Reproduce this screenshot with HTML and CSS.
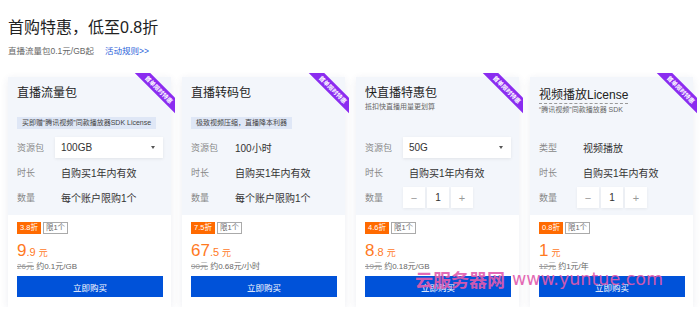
FILE: index.html
```html
<!DOCTYPE html>
<html lang="zh-CN">
<head>
<meta charset="utf-8">
<title>首购特惠</title>
<link rel="stylesheet" href="styles.css">
</head>
<body>
<div class="page">
  <h1 class="title">首购特惠，低至0.8折</h1>
  <p class="intro"><span>直播流量包0.1元/GB起</span><a class="rule">活动规则&gt;&gt;</a></p>
  <div class="cards">
    <div class="card">
      <div class="ribbon-wrap"><div class="ribbon">首单限时特惠</div></div>
      <div class="top">
        <div class="head">
          <div class="name">直播流量包</div>
          <div class="tag">买即赠“腾讯视频”同款播放器SDK License</div>
        </div>
        <div class="rows">
          <div class="row"><span class="label">资源包</span><div class="select"><span>100GB</span><i class="caret"></i></div></div>
          <div class="row"><span class="label">时长</span><span class="val">自购买1年内有效</span></div>
          <div class="row"><span class="label">数量</span><span class="val">每个账户限购1个</span></div>
        </div>
      </div>
      <div class="bottom">
        <div class="badges"><span class="off">3.8折</span><span class="limit">限1个</span></div>
        <div class="price"><span class="big">9</span><span class="dec">.9</span><span class="unit">元</span></div>
        <div class="old"><s>26元</s> 约0.1元/GB</div>
        <button class="buy">立即购买</button>
      </div>
    </div>

    <div class="card">
      <div class="ribbon-wrap"><div class="ribbon">首单限时特惠</div></div>
      <div class="top">
        <div class="head">
          <div class="name">直播转码包</div>
          <div class="tag">极致视频压缩，直播降本利器</div>
        </div>
        <div class="rows">
          <div class="row"><span class="label">资源包</span><span class="val">100小时</span></div>
          <div class="row"><span class="label">时长</span><span class="val">自购买1年内有效</span></div>
          <div class="row"><span class="label">数量</span><span class="val">每个账户限购1个</span></div>
        </div>
      </div>
      <div class="bottom">
        <div class="badges"><span class="off">7.5折</span><span class="limit">限1个</span></div>
        <div class="price"><span class="big">67</span><span class="dec">.5</span><span class="unit">元</span></div>
        <div class="old"><s>90元</s> 约0.68元/小时</div>
        <button class="buy">立即购买</button>
      </div>
    </div>

    <div class="card">
      <div class="ribbon-wrap"><div class="ribbon">首单限时特惠</div></div>
      <div class="top">
        <div class="head">
          <div class="name">快直播特惠包</div>
          <div class="sub">抵扣快直播用量更划算</div>
        </div>
        <div class="rows">
          <div class="row"><span class="label">资源包</span><div class="select"><span>50G</span><i class="caret"></i></div></div>
          <div class="row"><span class="label">时长</span><span class="val">自购买1年内有效</span></div>
          <div class="row"><span class="label">数量</span><div class="stepper"><span class="step">−</span><span class="num">1</span><span class="step">+</span></div></div>
        </div>
      </div>
      <div class="bottom">
        <div class="badges"><span class="off">4.6折</span><span class="limit">限1个</span></div>
        <div class="price"><span class="big">8</span><span class="dec">.8</span><span class="unit">元</span></div>
        <div class="old"><s>19元</s> 约0.18元/GB</div>
        <button class="buy">立即购买</button>
      </div>
    </div>

    <div class="card">
      <div class="ribbon-wrap"><div class="ribbon">首单限时特惠</div></div>
      <div class="top">
        <div class="head">
          <div class="name dotted">视频播放License</div>
          <div class="sub">“腾讯视频”同款播放器 SDK</div>
        </div>
        <div class="rows">
          <div class="row"><span class="label">类型</span><span class="val">视频播放</span></div>
          <div class="row"><span class="label">时长</span><span class="val">自购买1年内有效</span></div>
          <div class="row"><span class="label">数量</span><div class="stepper"><span class="step">−</span><span class="num">1</span><span class="step">+</span></div></div>
        </div>
      </div>
      <div class="bottom">
        <div class="badges"><span class="off">0.8折</span><span class="limit">限1个</span></div>
        <div class="price"><span class="big">1</span><span class="unit">元</span></div>
        <div class="old"><s>12元</s> 约1元/年</div>
        <button class="buy">立即购买</button>
      </div>
    </div>
  </div>
  <div class="watermark"><span class="wm-cn">云服务器网</span><span class="wm-en">www.yuntue.com</span></div>
</div>
</body>
</html>
```

FILE: styles.css
```css
* { box-sizing: border-box; margin: 0; padding: 0; }
body {
  background: #fff;
  font-family: "Liberation Sans", "Noto Sans CJK SC", sans-serif;
  color: #333;
}
.page { position: relative; padding: 16px 7px 0 8px; }
.title { font-size: 16px; line-height: 24px; font-weight: normal; color: #222; }
.intro { margin-top: 4px; font-size: 8.5px; line-height: 14px; color: #666; display: flex; gap: 11px; }
.rule { color: #2b62d9; }
.cards { margin-top: 19px; display: grid; grid-template-columns: repeat(4, 1fr); gap: 11px; }
.card { position: relative; background: #fff; box-shadow: 0 2px 8px rgba(40, 60, 110, 0.09); }
.top { background: #f3f6fb; padding: 8px 8px 7px 9px; }
.head { height: 52px; }
.name { font-size: 12px; line-height: 16px; color: #222; }
.name.dotted { display: inline-block; line-height: 15px; border-bottom: 1px dashed #999; }
.sub { font-size: 7px; line-height: 10px; color: #666; margin-top: 1px; }
.tag { margin-top: 16px; display: inline-block; background: #dfe7f6; font-size: 7px; line-height: 12px; padding: 0 5px; color: #444; }
.rows { display: flex; flex-direction: column; gap: 4px; }
.row { display: flex; align-items: center; height: 21px; }
.label { width: 38px; flex: none; font-size: 9px; color: #888; }
.val { padding-left: 6px; font-size: 10px; color: #333; }
.select {
  flex: 1; height: 21px; background: #fff;
  box-shadow: 0 1px 3px rgba(0, 0, 0, 0.08);
  display: flex; align-items: center; justify-content: space-between;
  padding: 0 8px 0 6px; font-size: 10px; color: #333;
}
.caret { width: 0; height: 0; border-left: 2.5px solid transparent; border-right: 2.5px solid transparent; border-top: 3px solid #555; }
.stepper { display: flex; gap: 2px; height: 21px; }
.stepper span {
  width: 22px; background: #fff; display: flex; align-items: center; justify-content: center;
  box-shadow: 0 1px 3px rgba(0, 0, 0, 0.06);
}
.step { font-size: 11px; color: #999; }
.num { font-size: 10px; color: #333; }
.bottom { padding: 7px 8px 10px 9px; }
.badges { display: flex; gap: 2px; height: 12px; }
.off { background: #ff6a00; color: #fff; font-size: 7.5px; line-height: 12px; padding: 0 3px; }
.limit { border: 1px solid #aaa; color: #666; font-size: 7.5px; line-height: 10px; padding: 0 2px; }
.price { margin-top: 6px; height: 21px; line-height: 21px; color: #ff7a1f; display: flex; align-items: baseline; }
.big { font-size: 17px; }
.dec { font-size: 11px; }
.unit { font-size: 9px; margin-left: 3px; }
.old { font-size: 8px; line-height: 11px; color: #666; }
.old s { color: #999; }
.buy {
  display: block; margin-top: 4px; width: 100%; height: 21px; border: 0;
  background: #0052d9; color: #fff; font-size: 8.5px; font-family: inherit;
}
.ribbon-wrap { position: absolute; top: -4px; right: -4px; width: 44px; height: 44px; overflow: hidden; z-index: 2; }
.ribbon {
  position: absolute; left: -7px; top: 10.5px; width: 70px; height: 11px;
  transform: rotate(45deg); background: #8b2cf0; color: #fff;
  font-size: 6px; line-height: 11px; text-align: center; font-weight: bold;
  font-family: "Noto Sans CJK SC", sans-serif;
}
.watermark { position: absolute; left: 415px; top: 267px; display: flex; align-items: center; gap: 7px; color: #e25aad; opacity: 0.9; pointer-events: none; }
.wm-cn { font-family: "Noto Sans CJK SC", sans-serif; font-size: 18px; line-height: 24px; font-weight: bold; }
.wm-en { font-family: "DejaVu Sans", sans-serif; font-size: 17.5px; line-height: 24px; }
```
